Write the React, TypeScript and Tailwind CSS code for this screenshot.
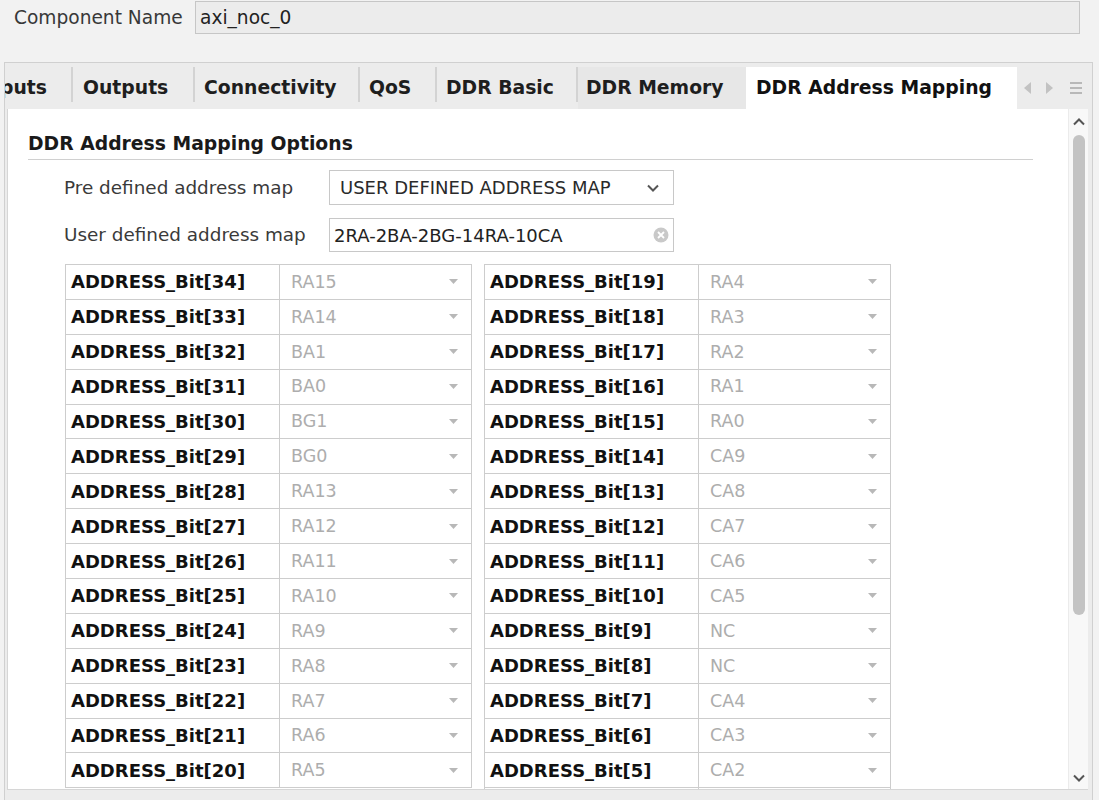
import React from 'react';

const leftRows: [number, string][] = [
  [34, 'RA15'], [33, 'RA14'], [32, 'BA1'], [31, 'BA0'], [30, 'BG1'],
  [29, 'BG0'], [28, 'RA13'], [27, 'RA12'], [26, 'RA11'], [25, 'RA10'],
  [24, 'RA9'], [23, 'RA8'], [22, 'RA7'], [21, 'RA6'], [20, 'RA5'],
];

const rightRows: [number, string][] = [
  [19, 'RA4'], [18, 'RA3'], [17, 'RA2'], [16, 'RA1'], [15, 'RA0'],
  [14, 'CA9'], [13, 'CA8'], [12, 'CA7'], [11, 'CA6'], [10, 'CA5'],
  [9, 'NC'], [8, 'NC'], [7, 'CA4'], [6, 'CA3'], [5, 'CA2'],
];

const AddrTable = ({ rows, more }: { rows: [number, string][]; more?: boolean }) => (
  <div className="w-[407px] shrink-0 border-t border-l border-r border-[#cdcdcd]">
    {rows.map(([bit, val]) => (
      <div key={bit} className="flex h-[34.9px] border-b border-[#cdcdcd]">
        <div className="w-[214px] shrink-0 border-r border-[#cdcdcd] pl-[5px] flex items-center font-bold text-[18px] text-[#111]">
          ADDRESS_Bit[{bit}]
        </div>
        <div className="flex-1 flex items-center justify-between pl-[11px] pr-[13px] text-[17.5px] text-[#adadad]">
          <span>{val}</span>
          <svg width="9" height="5" viewBox="0 0 9 5">
            <path d="M0 0h9L4.5 5z" fill="#b8b8b8" />
          </svg>
        </div>
      </div>
    ))}
    {/* next row, scrolled out of view */}
    {more && (
      <div className="flex h-[20px]">
        <div className="w-[214px] shrink-0 border-r border-[#cdcdcd]" />
      </div>
    )}
  </div>
);

const Sep = () => <div className="w-[2px] h-[35px] self-start mt-[4px] bg-[#d3d3d3] shrink-0" />;

export default function App() {
  return (
    <div className="w-[1099px] h-[800px] overflow-hidden bg-[#f2f2f2] font-['DejaVu_Sans',sans-serif] text-[#333]">
      {/* component name */}
      <div className="flex items-center pt-[1px] h-[34px]">
        <span className="pl-[14px] w-[195px] text-[18.6px] text-[#383838]">Component Name</span>
        <div className="w-[885px] h-[33px] bg-[#ececec] border border-[#c6c6c6] flex items-center pl-[4px] text-[18.6px] text-[#222]">
          axi_noc_0
        </div>
      </div>

      {/* tab panel */}
      <div className="ml-[4px] mt-[28px] w-[1089px] h-[740px] border border-[#d0d0d0] bg-[#ececec]">
        {/* tab strip */}
        <div className="flex h-[46px] items-end text-[18.8px] font-bold text-[#1e1e1e]">
          <div className="w-[66px] h-[42px] overflow-hidden flex items-center justify-end pr-[24px] whitespace-nowrap">
            Inputs
          </div>
          <Sep />
          <div className="w-[120px] h-[42px] flex items-center pl-[10px] whitespace-nowrap">Outputs</div>
          <Sep />
          <div className="w-[163px] h-[42px] flex items-center pl-[9px] whitespace-nowrap">Connectivity</div>
          <Sep />
          <div className="w-[75px] h-[42px] flex items-center pl-[9px] whitespace-nowrap">QoS</div>
          <Sep />
          <div className="w-[139px] h-[42px] flex items-center pl-[9px] whitespace-nowrap">DDR Basic</div>
          <Sep />
          <div className="w-[168px] h-[42px] flex items-center pl-[8px] whitespace-nowrap bg-[#e7e7e7]">DDR Memory</div>
          <div className="w-[271px] h-[42px] bg-white flex items-center pl-[10px] whitespace-nowrap text-[#111]">
            DDR Address Mapping
          </div>
          <div className="flex-1 h-[42px] flex items-center pl-[7px] gap-[13px]">
            <svg width="8" height="12" viewBox="0 0 8 12"><path d="M7 0v12L0 6z" fill="#c2c2c2" /></svg>
            <svg width="8" height="12" viewBox="0 0 8 12"><path d="M1 0v12l7-6z" fill="#c2c2c2" /></svg>
            <svg width="14" height="14" viewBox="0 0 14 14" className="ml-[3px]">
              <path d="M1 2h12M1 7h12M1 12h12" stroke="#b8b8b8" strokeWidth="2" />
            </svg>
          </div>
        </div>

        {/* content */}
        <div className="ml-[2px] mr-[4px] h-[681px] flex bg-white border-l border-b border-[#d6d6d6]">
          <div className="flex-1 overflow-hidden pl-[20px]">
            <div className="mt-[24px] w-[1005px] pb-[4px] border-b border-[#d0d0d0] font-bold text-[18.8px] leading-[22px] text-[#1a1a1a]">
              DDR Address Mapping Options
            </div>

            <div className="ml-[36px] mt-[10px] flex items-center h-[35px]">
              <span className="w-[265px] text-[18.4px] text-[#3a3a3a]">Pre defined address map</span>
              <div className="w-[345px] h-full border border-[#c8c8c8] flex items-center justify-between pl-[10px] pr-[14px] text-[18px] text-[#2a2a2a]">
                <span>USER DEFINED ADDRESS MAP</span>
                <svg width="12" height="8" viewBox="0 0 12 8">
                  <path d="M1 1.5l5 5 5-5" fill="none" stroke="#555" strokeWidth="2" />
                </svg>
              </div>
            </div>

            <div className="ml-[36px] mt-[13px] flex items-center h-[34px]">
              <span className="w-[265px] text-[18.4px] text-[#3a3a3a]">User defined address map</span>
              <div className="w-[345px] h-full border border-[#c8c8c8] flex items-center justify-between pl-[4px] pr-[4px] text-[18px] text-[#222]">
                <span>2RA-2BA-2BG-14RA-10CA</span>
                <svg width="16" height="16" viewBox="0 0 16 16">
                  <circle cx="8" cy="8" r="7.5" fill="#c9c9c9" />
                  <path d="M5 5l6 6M11 5l-6 6" stroke="#fff" strokeWidth="1.8" />
                </svg>
              </div>
            </div>

            <div className="ml-[37px] mt-[12px] flex items-start gap-[12px]">
              <AddrTable rows={leftRows} />
              <AddrTable rows={rightRows} more />
            </div>
          </div>

          {/* scrollbar */}
          <div className="w-[20px] shrink-0 bg-[#f8f8f8] border-l border-[#ebebeb] flex flex-col items-center">
            <div className="h-[25px] flex items-center justify-center">
              <svg width="12" height="8" viewBox="0 0 12 8">
                <path d="M1 6.5l5-5 5 5" fill="none" stroke="#555" strokeWidth="2" />
              </svg>
            </div>
            <div className="mt-[1px] w-[12px] h-[480px] rounded-full bg-[#c3c3c3]" />
            <div className="mt-auto mb-[3px] h-[16px] flex items-center justify-center">
              <svg width="12" height="8" viewBox="0 0 12 8">
                <path d="M1 1.5l5 5 5-5" fill="none" stroke="#555" strokeWidth="2" />
              </svg>
            </div>
          </div>
        </div>
      </div>
    </div>
  );
}
